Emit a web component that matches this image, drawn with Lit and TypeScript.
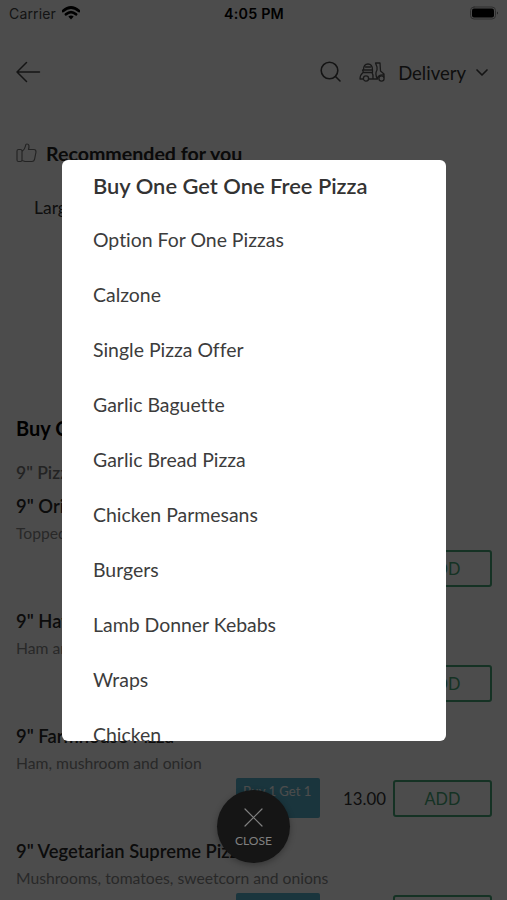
import { LitElement, html, css, svg } from "lit";
import { customElement } from "lit/decorators.js";

const categories = ["Option For One Pizzas", "Calzone", "Single Pizza Offer", "Garlic Baguette", "Garlic Bread Pizza", "Chicken Parmesans", "Burgers", "Lamb Donner Kebabs", "Wraps", "Chicken"];

const items = [
  { name: '9" Original Pizza', desc: "Topped with cheese and tomato", price: "11.00" },
  { name: '9" Hawaiian Pizza', desc: "Ham and pineapple", price: "12.00" },
  { name: '9" Farmhouse Pizza', desc: "Ham, mushroom and onion", price: "13.00" },
  { name: '9" Vegetarian Supreme Pizza', desc: "Mushrooms, tomatoes, sweetcorn and onions", price: "13.00" },
];

const arrow = svg`<path d="M23.5 11H1M10.5 1.5L1 11L10.5 20.5"/>`;

@customElement("menu-item")
class MenuItem extends LitElement {
  static properties = { item: { attribute: false } };
  declare item: (typeof items)[number];
  static styles = css`
    :host { display: block; height: 115px; box-sizing: border-box; }
    .name { font-size: 18.4px; line-height: 24px; font-weight: 600; color: #2a2a2a; }
    .desc { font-size: 15.7px; line-height: 20px; margin-top: 5px; color: #888; }
    .row { display: flex; align-items: flex-start; justify-content: flex-end; margin-top: 5px; }
    .offer { box-sizing: border-box; width: 84px; height: 40px; border-radius: 2px; background: #58b2cc; color: #fff; font-size: 13.1px; line-height: 18px; padding: 4px 4px 4px 7px; white-space: nowrap; overflow: hidden; }
    .price { width: 66px; text-align: right; font-size: 16.8px; line-height: 24px; margin-top: 9px; color: #333; }
    .add { box-sizing: border-box; width: 99px; height: 37px; margin: 2px 0 0 7px; border: 2px solid #46a878; border-radius: 3px; color: #46a878; text-align: center; font-size: 16.3px; line-height: 34px; }
  `;
  render() {
    return html`<div class="name">${this.item.name}</div>
      <div class="desc">${this.item.desc}</div>
      <div class="row"><div class="offer">Buy 1 Get 1</div><div class="price">${this.item.price}</div><div class="add">ADD</div></div>`;
  }
}

@customElement("app-root")
class AppRoot extends LitElement {
  static styles = css`
    :host { display: block; position: relative; width: 507px; height: 900px; overflow: hidden; background: #fff; font-family: Lato, sans-serif; font-variant-ligatures: none; }
    svg { display: block; fill: none; stroke: currentColor; stroke-linecap: round; stroke-linejoin: round; }
    .page { height: 900px; overflow: hidden; }
    .status { display: grid; grid-template-columns: 1fr auto 1fr; align-items: center; height: 28px; padding: 0 8px 0 9px; font: 14px/28px Inter, sans-serif; color: #444; }
    .carrier { display: flex; align-items: center; gap: 6px; letter-spacing: 0.15px; }
    .wifi { color: #000; margin-top: -2px; }
    .time { font-weight: 600; color: #000; font-size: 14.3px; letter-spacing: 0.2px; }
    .battery { justify-self: end; margin-top: -2px; }
    .nav { display: flex; align-items: center; height: 88px; padding: 0 18px 0 16px; color: #444; }
    .search { margin-left: auto; }
    .scooter { margin-left: 17px; color: #555; }
    .mode { font-size: 18.5px; margin: 2px 9px 0 12px; line-height: 24px; color: #333; }
    .rec { display: flex; align-items: center; gap: 9px; margin: 25px 0 0 16px; height: 24px; font-size: 19.6px; font-weight: 700; color: #222; }
    .thumb { color: #777; }
    .card { box-sizing: border-box; height: 194px; margin: 10px 16px 0; padding: 21px 18px; font-size: 17.5px; line-height: 24px; color: #333; background: #fdfdfd; }
    .list { margin: 46px 15px 0 16px; }
    .heading { font-size: 20px; line-height: 26px; font-weight: 700; color: #000; }
    .sub { font-size: 17.5px; line-height: 24px; font-weight: 600; color: #777; margin: 20px 0 9px; }
    .shade { position: absolute; inset: 0; background: rgba(0, 0, 0, 0.7); }
    .dialog { position: absolute; left: 62px; top: 160px; box-sizing: border-box; width: 384px; height: 581px; padding: 13px 31px 0; border-radius: 6px; background: #fff; overflow: hidden; color: #3c3c3c; }
    .title { font-size: 21.9px; line-height: 26px; font-weight: 600; color: #333; margin-bottom: 13px; white-space: nowrap; }
    .option { font-size: 19.45px; line-height: 55px; height: 55px; }
    .close { position: absolute; left: 217px; top: 790px; box-sizing: border-box; width: 73px; height: 73px; padding-top: 18px; border-radius: 50%; background: #151515; color: #808080; display: flex; flex-direction: column; align-items: center; gap: 6px; font-size: 12.1px; line-height: 16px; box-shadow: 0 2px 6px rgba(0, 0, 0, 0.3); }
  `;
  render() {
    return html`
      <div class="page">
        <div class="status">
          <div class="carrier">Carrier
            <svg class="wifi" width="18" height="14" viewBox="0 0 18 14" stroke-width="2.8" stroke-linecap="butt"><path d="M1 5Q9-2 17 5M4 8.3Q9 4 14 8.3"/><path d="M6.3 10.5Q9 8.5 11.7 10.5L9 13.4Z" fill="currentColor" stroke="none"/></svg>
          </div>
          <div class="time">4:05 PM</div>
          <svg class="battery" width="30" height="14" viewBox="0 0 30 14"><rect x="1.5" y="1" width="25" height="12" rx="3.5" stroke="#999"/><rect x="3" y="2.5" width="22" height="9" rx="2" fill="#000" stroke="none"/><path d="M28 5.5Q30 7 28 8.5Z" fill="#666" stroke="none"/></svg>
        </div>
        <div class="nav">
          <svg width="25" height="22" viewBox="0 0 25 22" stroke-width="1.5">${arrow}</svg>
          <svg class="search" width="22" height="22" viewBox="0 0 22 22" stroke-width="1.6"><circle cx="9.5" cy="9.5" r="8.3"/><path d="M15.5 15.5L20 20"/></svg>
          <svg class="scooter" width="27" height="20" viewBox="0 0 27 20" stroke-width="1.3"><path d="M4.5 8Q4.5 2 9 2T13.5 8M3.5 8H13.5V10.5H4.5ZM4 10.5Q1 13 1 17H4M9.5 17H18.5Q15.5 12 18 8V5L16.5 1H21L21.5 9L25 12V15M18.5 17Q19 12 25 13M13 10.5Q14.5 12.5 14 17M6.5 5H11.5"/><circle cx="7" cy="16.5" r="2.6"/><circle cx="22.5" cy="16.5" r="2.6"/></svg>
          <div class="mode">Delivery</div>
          <svg width="14" height="9" viewBox="0 0 14 9" stroke-width="1.7"><path d="M2 2L7 7L12 2"/></svg>
        </div>
        <div class="rec">
          <svg class="thumb" width="21" height="20" viewBox="0 0 21 20" stroke-width="1.2"><path d="M2.5 6.5H4.5Q6 6.5 6 8V17Q6 18.5 4.5 18.5H2.5Q1 18.5 1 17V8Q1 6.5 2.5 6.5ZM6 8.5Q9 6 9.5 3Q9.5 1 11 1Q14 1 12.5 6.5H18Q20 6.5 20 9L18.5 16.5Q18 18.5 16 18.5H9L6 17.5"/></svg>
          <div>Recommended for you</div>
        </div>
        <div class="card">Large Pizza</div>
        <div class="list">
          <div class="heading">Buy One Get One Free Pizza</div>
          <div class="sub">9" Pizza</div>
          ${items.map((item) => html`<menu-item .item=${item}></menu-item>`)}
        </div>
      </div>
      <div class="shade"></div>
      <div class="dialog">
        <div class="title">Buy One Get One Free Pizza</div>
        ${categories.map((c) => html`<div class="option">${c}</div>`)}
      </div>
      <div class="close">
        <svg width="19" height="19" viewBox="0 0 19 19" stroke-width="1.2"><path d="M1 1L18 18M18 1L1 18"/></svg>
        <div>CLOSE</div>
      </div>`;
  }
}
